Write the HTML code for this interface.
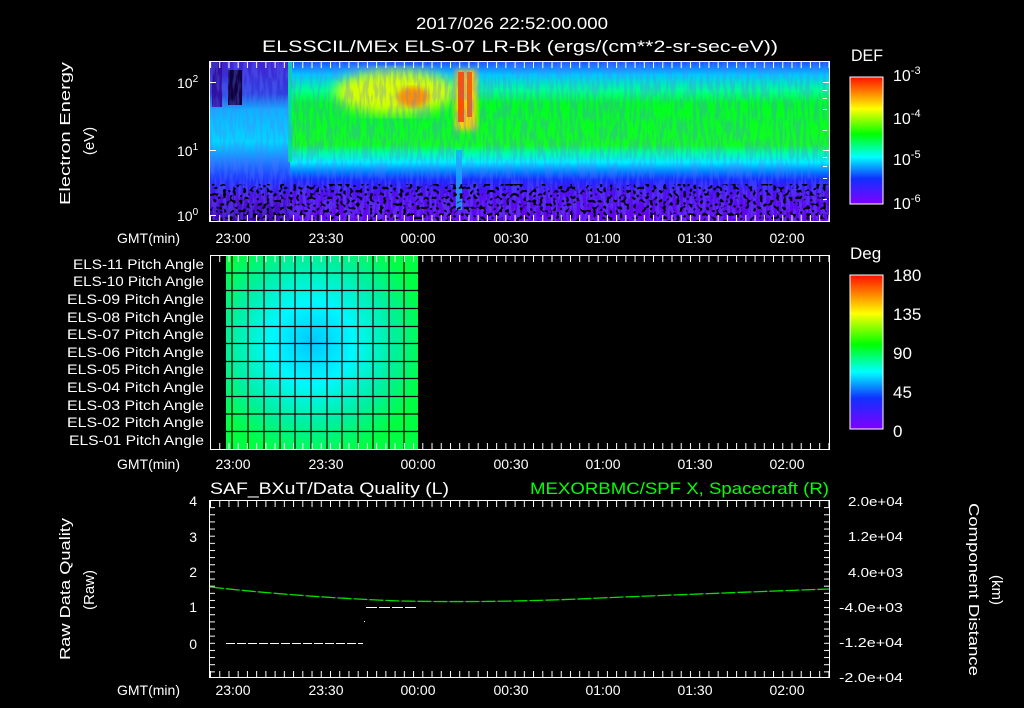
<!DOCTYPE html>
<html><head><meta charset="utf-8"><style>
html,body{margin:0;padding:0;background:#000;}
svg{display:block;}
text{font-family:"Liberation Sans",sans-serif;fill:#fff;}
</style></head><body>
<svg width="1024" height="708" viewBox="0 0 1024 708" xmlns="http://www.w3.org/2000/svg">
<defs>
 <linearGradient id="main" x1="0" y1="62" x2="0" y2="221" gradientUnits="userSpaceOnUse">
  <stop offset="0" stop-color="#2050ff"/>
  <stop offset="0.08" stop-color="#00c8ff"/>
  <stop offset="0.18" stop-color="#00ff90"/>
  <stop offset="0.26" stop-color="#00ff20"/>
  <stop offset="0.52" stop-color="#10ff20"/>
  <stop offset="0.57" stop-color="#00ffa0"/>
  <stop offset="0.63" stop-color="#00f0ff"/>
  <stop offset="0.68" stop-color="#0090ff"/>
  <stop offset="0.74" stop-color="#1828ff"/>
  <stop offset="0.82" stop-color="#5010f0"/>
  <stop offset="1" stop-color="#6a00f0"/>
 </linearGradient>
 <linearGradient id="left" x1="0" y1="62" x2="0" y2="221" gradientUnits="userSpaceOnUse">
  <stop offset="0" stop-color="#4020d0"/>
  <stop offset="0.2" stop-color="#3040e0"/>
  <stop offset="0.3" stop-color="#10b0ff"/>
  <stop offset="0.5" stop-color="#00d8ff"/>
  <stop offset="0.62" stop-color="#2080ff"/>
  <stop offset="0.75" stop-color="#2030ff"/>
  <stop offset="0.85" stop-color="#5010e0"/>
  <stop offset="1" stop-color="#4000b0"/>
 </linearGradient>
 <linearGradient id="cb" x1="0" y1="0" x2="0" y2="1">
  <stop offset="0" stop-color="#ff1000"/>
  <stop offset="0.12" stop-color="#ff8000"/>
  <stop offset="0.25" stop-color="#ffff00"/>
  <stop offset="0.45" stop-color="#00ff00"/>
  <stop offset="0.63" stop-color="#00ffff"/>
  <stop offset="0.8" stop-color="#1030ff"/>
  <stop offset="1" stop-color="#8000ff"/>
 </linearGradient>
 <radialGradient id="pa" cx="0.45" cy="0.45" r="0.6">
  <stop offset="0" stop-color="#00c8ff"/>
  <stop offset="0.35" stop-color="#00f8ff"/>
  <stop offset="0.7" stop-color="#00f0a0"/>
  <stop offset="1" stop-color="#00ff40"/>
 </radialGradient>
 <filter id="blur6"><feGaussianBlur stdDeviation="6"/></filter>
 <filter id="blur3"><feGaussianBlur stdDeviation="3"/></filter>
 <filter id="speck" x="0" y="0" width="1" height="1">
  <feTurbulence type="fractalNoise" baseFrequency="0.3" numOctaves="1" seed="4"/>
  <feColorMatrix type="matrix" values="0 0 0 0 0  0 0 0 0 0  0 0 0 0 0  12 0 0 0 -6.6"/>
 </filter>
 <filter id="speck2" x="0" y="0" width="1" height="1">
  <feTurbulence type="fractalNoise" baseFrequency="0.3 0.05" numOctaves="2" seed="9"/>
  <feColorMatrix type="matrix" values="0 0 0 0 0.1  0 0 0 0 0.2  0 0 0 0 1  0 0 0 -6 3.4"/>
 </filter>
 <pattern id="tk" x="210" y="0" width="9.23" height="10" patternUnits="userSpaceOnUse">
  <rect x="0" y="0" width="1" height="10" fill="#fff"/>
 </pattern>
 <pattern id="tky" x="0" y="500" width="10" height="7.14" patternUnits="userSpaceOnUse">
  <rect x="0" y="0" width="10" height="1" fill="#fff"/>
 </pattern>
 <clipPath id="c1"><rect x="210" y="62" width="619" height="159"/></clipPath>
</defs>

<!-- titles -->
<text x="416" y="29" font-size="17" textLength="192" lengthAdjust="spacingAndGlyphs">2017/026 22:52:00.000</text>
<text x="262" y="52" font-size="17" textLength="516" lengthAdjust="spacingAndGlyphs">ELSSCIL/MEx ELS-07 LR-Bk  (ergs/(cm**2-sr-sec-eV))</text>

<!-- PANEL 1 -->
<g clip-path="url(#c1)">
 <rect x="210" y="62" width="619" height="159" fill="url(#main)"/>
 <rect x="210" y="62" width="80" height="159" fill="url(#left)"/>
 <rect x="212" y="62" width="10" height="45" fill="#3010a0"/>
 <rect x="228" y="70" width="14" height="35" fill="#100040"/>
 <rect x="288" y="62" width="4" height="100" fill="#00e0a0"/>
 <ellipse cx="395" cy="92" rx="60" ry="22" fill="#d8ff00" filter="url(#blur6)"/>
 <ellipse cx="413" cy="97" rx="16" ry="10" fill="#ff9000" filter="url(#blur3)"/>
 <rect x="455" y="70" width="22" height="60" fill="#ffd000" filter="url(#blur3)"/>
 <rect x="458" y="72" width="6" height="50" fill="#ff5000"/>
 <rect x="467" y="72" width="5" height="45" fill="#ff6000"/>
 <rect x="456" y="150" width="6" height="60" fill="#10b0ff" opacity="0.8"/>
 <rect x="210" y="62" width="619" height="159" filter="url(#speck2)" opacity="0.3"/>
 <rect x="210" y="184" width="619" height="37" filter="url(#speck)"/>
</g>
<rect x="209.5" y="61.5" width="620" height="160" fill="none" stroke="#fff"/>
<rect x="210" y="62" width="619" height="6" fill="url(#tk)"/>
<rect x="210" y="215" width="619" height="6" fill="url(#tk)"/>
<g fill="#fff">
 <rect x="210" y="82" width="6" height="1"/><rect x="210" y="150" width="6" height="1"/><rect x="210" y="215" width="6" height="1"/>
 <rect x="823" y="82" width="6" height="1"/><rect x="823" y="90" width="4" height="1"/><rect x="823" y="98" width="4" height="1"/><rect x="823" y="109" width="4" height="1"/><rect x="823" y="130" width="4" height="1"/>
 <rect x="823" y="150" width="6" height="1"/><rect x="823" y="157" width="4" height="1"/><rect x="823" y="166" width="4" height="1"/><rect x="823" y="178" width="4" height="1"/><rect x="823" y="199" width="4" height="1"/>
</g>
<text x="177" y="88" font-size="14">10<tspan dy="-6" font-size="10">2</tspan></text>
<text x="177" y="156" font-size="14">10<tspan dy="-6" font-size="10">1</tspan></text>
<text x="177" y="221" font-size="14">10<tspan dy="-6" font-size="10">0</tspan></text>
<text transform="translate(70,205) rotate(-90)" font-size="15" textLength="143" lengthAdjust="spacingAndGlyphs">Electron Energy</text>
<text transform="translate(94,141) rotate(-90)" font-size="15" text-anchor="middle">(eV)</text>

<!-- colorbar 1 -->
<text x="851" y="61" font-size="17" textLength="32" lengthAdjust="spacingAndGlyphs">DEF</text>
<rect x="850" y="77" width="33" height="127" fill="url(#cb)" stroke="#fff"/>
<text x="893" y="81" font-size="16">10<tspan dy="-7" font-size="11">-3</tspan></text>
<text x="893" y="124" font-size="16">10<tspan dy="-7" font-size="11">-4</tspan></text>
<text x="893" y="165" font-size="16">10<tspan dy="-7" font-size="11">-5</tspan></text>
<text x="893" y="209" font-size="16">10<tspan dy="-7" font-size="11">-6</tspan></text>

<g font-size="14">
<text x="117" y="243" textLength="63" lengthAdjust="spacingAndGlyphs">GMT(min)</text>
<text x="233" y="243" text-anchor="middle">23:00</text><text x="326" y="243" text-anchor="middle">23:30</text><text x="418" y="243" text-anchor="middle">00:00</text><text x="511" y="243" text-anchor="middle">00:30</text><text x="603" y="243" text-anchor="middle">01:00</text><text x="695" y="243" text-anchor="middle">01:30</text><text x="787" y="243" text-anchor="middle">02:00</text>
</g>

<!-- PANEL 2 -->
<rect x="226" y="256" width="192" height="193" fill="url(#pa)"/>
<g stroke="#000" stroke-width="1.2">
 <line x1="232" y1="256" x2="232" y2="449"/><line x1="248" y1="256" x2="248" y2="449"/><line x1="264" y1="256" x2="264" y2="449"/><line x1="280" y1="256" x2="280" y2="449"/><line x1="295" y1="256" x2="295" y2="449"/><line x1="311" y1="256" x2="311" y2="449"/><line x1="327" y1="256" x2="327" y2="449"/><line x1="342" y1="256" x2="342" y2="449"/><line x1="358" y1="256" x2="358" y2="449"/><line x1="373" y1="256" x2="373" y2="449"/><line x1="389" y1="256" x2="389" y2="449"/><line x1="404" y1="256" x2="404" y2="449"/>
 <line x1="226" y1="273" x2="418" y2="273"/><line x1="226" y1="290.5" x2="418" y2="290.5"/><line x1="226" y1="308.5" x2="418" y2="308.5"/><line x1="226" y1="326.5" x2="418" y2="326.5"/><line x1="226" y1="343.5" x2="418" y2="343.5"/><line x1="226" y1="361.5" x2="418" y2="361.5"/><line x1="226" y1="378.5" x2="418" y2="378.5"/><line x1="226" y1="396.5" x2="418" y2="396.5"/><line x1="226" y1="414" x2="418" y2="414"/><line x1="226" y1="431.5" x2="418" y2="431.5"/>
</g>
<rect x="210.5" y="255.5" width="619" height="194" fill="none" stroke="#fff"/>
<rect x="210" y="256" width="619" height="6" fill="url(#tk)"/>
<rect x="210" y="443" width="619" height="6" fill="url(#tk)"/>
<g font-size="13.5">
<text x="73" y="269" textLength="131" lengthAdjust="spacingAndGlyphs">ELS-11 Pitch Angle</text><text x="73" y="286" textLength="131" lengthAdjust="spacingAndGlyphs">ELS-10 Pitch Angle</text><text x="67" y="304" textLength="137" lengthAdjust="spacingAndGlyphs">ELS-09 Pitch Angle</text><text x="67" y="322" textLength="137" lengthAdjust="spacingAndGlyphs">ELS-08 Pitch Angle</text><text x="67" y="339" textLength="137" lengthAdjust="spacingAndGlyphs">ELS-07 Pitch Angle</text><text x="67" y="357" textLength="137" lengthAdjust="spacingAndGlyphs">ELS-06 Pitch Angle</text><text x="67" y="374" textLength="137" lengthAdjust="spacingAndGlyphs">ELS-05 Pitch Angle</text><text x="67" y="392" textLength="137" lengthAdjust="spacingAndGlyphs">ELS-04 Pitch Angle</text><text x="67" y="410" textLength="137" lengthAdjust="spacingAndGlyphs">ELS-03 Pitch Angle</text><text x="67" y="427" textLength="137" lengthAdjust="spacingAndGlyphs">ELS-02 Pitch Angle</text><text x="69" y="445" textLength="135" lengthAdjust="spacingAndGlyphs">ELS-01 Pitch Angle</text>
</g>
<text x="850" y="259" font-size="17">Deg</text>
<rect x="850" y="275" width="33" height="154" fill="url(#cb)" stroke="#fff"/>
<g font-size="17"><text x="893" y="281">180</text><text x="893" y="320">135</text><text x="893" y="359">90</text><text x="893" y="398">45</text><text x="893" y="437">0</text></g>
<g font-size="14">
<text x="117" y="469" textLength="63" lengthAdjust="spacingAndGlyphs">GMT(min)</text>
<text x="233" y="469" text-anchor="middle">23:00</text><text x="326" y="469" text-anchor="middle">23:30</text><text x="418" y="469" text-anchor="middle">00:00</text><text x="511" y="469" text-anchor="middle">00:30</text><text x="603" y="469" text-anchor="middle">01:00</text><text x="695" y="469" text-anchor="middle">01:30</text><text x="787" y="469" text-anchor="middle">02:00</text>
</g>

<!-- PANEL 3 -->
<text x="210" y="494" font-size="17" textLength="239" lengthAdjust="spacingAndGlyphs">SAF_BXuT/Data Quality (L)</text>
<text x="530" y="494" font-size="17" textLength="299" lengthAdjust="spacingAndGlyphs" style="fill:#00ff00">MEXORBMC/SPF X, Spacecraft (R)</text>
<rect x="209.5" y="500.5" width="620" height="177" fill="none" stroke="#fff"/>
<rect x="210" y="501" width="619" height="6" fill="url(#tk)"/>
<rect x="210" y="671" width="619" height="6" fill="url(#tk)"/>
<rect x="210" y="500" width="5" height="178" fill="url(#tky)"/>
<rect x="824" y="500" width="5" height="178" fill="url(#tky)"/>
<path d="M210 587 Q300 597 400 601 Q500 603 600 598 Q720 593 829 589" fill="none" stroke="#00e000" stroke-width="1.3" stroke-dasharray="14 2"/>
<g stroke="#fff" stroke-width="1">
 <line x1="226" y1="643.5" x2="363" y2="643.5" stroke-dasharray="9 2"/>
 <line x1="366" y1="607.5" x2="418" y2="607.5" stroke-dasharray="11 2"/>
</g>
<rect x="364" y="621" width="1" height="1" fill="#fff"/>
<g font-size="14" text-anchor="end">
<text x="197" y="506">4</text><text x="197" y="542">3</text><text x="197" y="577">2</text><text x="197" y="612">1</text><text x="197" y="649">0</text>
</g>
<g font-size="13">
<text x="848" y="506" textLength="55" lengthAdjust="spacingAndGlyphs">2.0e+04</text><text x="848" y="541" textLength="55" lengthAdjust="spacingAndGlyphs">1.2e+04</text><text x="848" y="577" textLength="55" lengthAdjust="spacingAndGlyphs">4.0e+03</text><text x="839" y="612" textLength="64" lengthAdjust="spacingAndGlyphs">-4.0e+03</text><text x="839" y="647" textLength="64" lengthAdjust="spacingAndGlyphs">-1.2e+04</text><text x="839" y="682" textLength="64" lengthAdjust="spacingAndGlyphs">-2.0e+04</text>
</g>
<text transform="translate(70,660) rotate(-90)" font-size="15" textLength="142" lengthAdjust="spacingAndGlyphs">Raw Data Quality</text>
<text transform="translate(94,590) rotate(-90)" font-size="15" text-anchor="middle">(Raw)</text>
<text transform="translate(969,503) rotate(90)" font-size="15" textLength="173" lengthAdjust="spacingAndGlyphs">Component Distance</text>
<text transform="translate(992,590) rotate(90)" font-size="15" text-anchor="middle">(km)</text>
<g font-size="14">
<text x="117" y="695" textLength="63" lengthAdjust="spacingAndGlyphs">GMT(min)</text>
<text x="233" y="695" text-anchor="middle">23:00</text><text x="326" y="695" text-anchor="middle">23:30</text><text x="418" y="695" text-anchor="middle">00:00</text><text x="511" y="695" text-anchor="middle">00:30</text><text x="603" y="695" text-anchor="middle">01:00</text><text x="695" y="695" text-anchor="middle">01:30</text><text x="787" y="695" text-anchor="middle">02:00</text>
</g>
</svg>
</body></html>
